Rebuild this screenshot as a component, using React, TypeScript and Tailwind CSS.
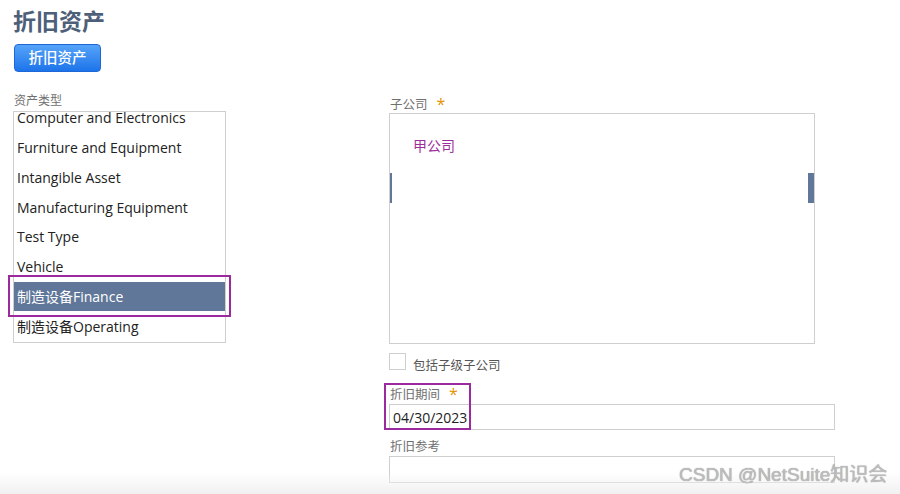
import React from "react";

const items = [
  "Computer and Electronics",
  "Furniture and Equipment",
  "Intangible Asset",
  "Manufacturing Equipment",
  "Test Type",
  "Vehicle",
  "制造设备Finance",
  "制造设备Operating",
];

function Star() {
  return <span className="ml-[9px] text-[16px] leading-[14px] text-[#e39500] relative top-[-1px]">*</span>;
}

export default function App() {
  return (
    <div
      className="relative w-[900px] h-[494px] overflow-hidden bg-white pl-[13px]"
      style={{ fontFamily: "'Open Sans', 'Noto Sans CJK SC', sans-serif" }}
    >
      <div className="mt-[6px] text-[23px] leading-[30px] font-bold text-[#4d5f79]">折旧资产</div>
      <button className="mt-[8px] ml-[1px] h-[28px] w-[87px] rounded-[4px] border border-[#1f67d6] bg-gradient-to-b from-[#55a3f8] to-[#1c74ea] text-[14.5px] leading-[26px] font-medium text-white">
        折旧资产
      </button>

      <div className="flex items-start gap-[163px]">
        {/* left column */}
        <div className="w-[213px]">
          <div className="mt-[22px] pl-[1px] text-[12px] leading-[14px] text-[#6f6f6f]">资产类型</div>
          <div className="relative mt-[3px] h-[232px] overflow-hidden border border-[#cfcfcf]">
            <div className="-mt-[9px]">
              {items.map((it) => {
                const sel = it === "制造设备Finance";
                return (
                  <div
                    key={it}
                    className={
                      "flex h-[29.75px] items-center pl-[3px] text-[14px] " +
                      (sel ? "bg-[#607799] text-white" : "text-[#222]")
                    }
                  >
                    {it}
                  </div>
                );
              })}
            </div>
          </div>
        </div>

        {/* right column */}
        <div className="w-[446px] pt-[3px]">
          <div className="mt-[23px] flex items-center pl-[1px] text-[12.5px] leading-[14px] text-[#6f6f6f]">
            子公司
            <Star />
          </div>
          <div className="mt-[1px] h-[231px] w-[426px] border border-[#cfcfcf]">
            <div className="pt-[22px] pl-[23px] text-[14px] leading-[20px] text-[#9c2f9c]">甲公司</div>
            <div className="mt-[17px] flex h-[30px] justify-between">
              <div className="w-[2px] bg-[#607799]" />
              <div className="w-[6px] bg-[#607799]" />
            </div>
          </div>
          <div className="mt-[9px] flex items-start">
            <div className="h-[17px] w-[17px] border border-[#cfcfcf] bg-white" />
            <div className="ml-[7px] mt-[6px] text-[12.5px] leading-[14px] text-[#555]">包括子级子公司</div>
          </div>
          <div className="mt-[15px] flex items-center pl-[1px] text-[12.5px] leading-[14px] text-[#6f6f6f]">
            折旧期间
            <Star />
          </div>
          <div className="mt-[2px] flex h-[26px] items-center border border-[#cfcfcf] pl-[3px] text-[14px] text-[#222]">
            04/30/2023
          </div>
          <div className="mt-[10px] pl-[1px] text-[12.5px] leading-[14px] text-[#6f6f6f]">折旧参考</div>
          <div className="mt-[2px] h-[27px] border border-[#cfcfcf]" />
        </div>
      </div>

      {/* annotation boxes */}
      <div className="pointer-events-none absolute left-[8px] top-[275px] h-[42px] w-[223px] border-2 border-[#9a2a9e]" />
      <div className="pointer-events-none absolute left-[384px] top-[383px] h-[47px] w-[87px] border-2 border-[#9a2a9e]" />

      {/* bottom fade */}
      <div className="pointer-events-none absolute bottom-0 left-0 h-[22px] w-full bg-gradient-to-b from-white/0 to-[#f1f1f1]" />

      {/* watermark */}
      <div
        className="pointer-events-none absolute left-[679px] top-[465px] text-[19px] leading-[20px] text-[#bdbdbd] [text-shadow:0_0_1px_#8a8a8a]"
        style={{ fontFamily: "'Liberation Sans', 'Noto Sans CJK SC', sans-serif" }}
      >
        CSDN @NetSuite知识会
      </div>
    </div>
  );
}
